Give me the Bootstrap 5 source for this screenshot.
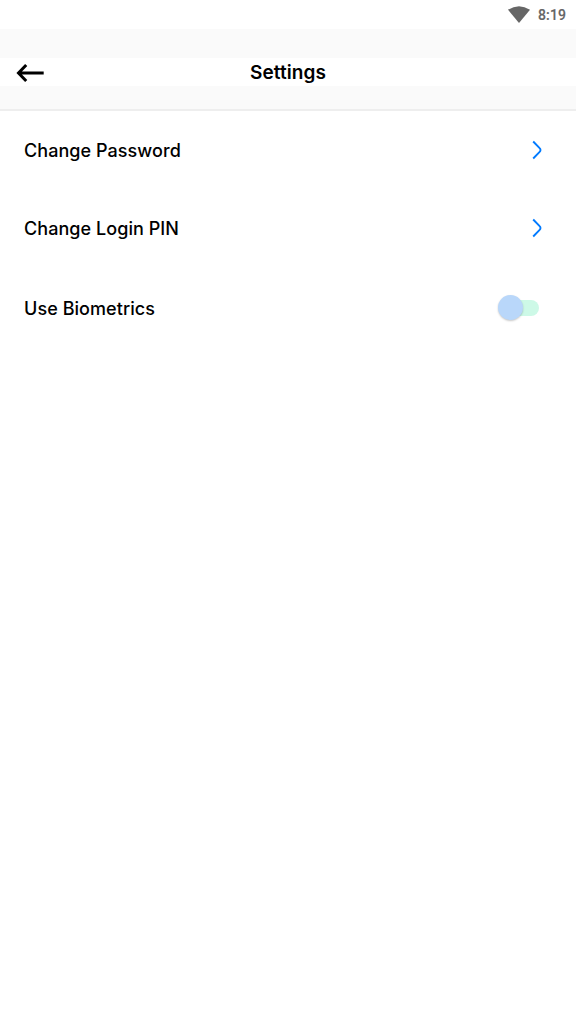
<!DOCTYPE html>
<html lang="en">
<head>
<meta charset="utf-8">
<meta name="viewport" content="width=device-width, initial-scale=1">
<title>Settings</title>
<link href="https://cdn.jsdelivr.net/npm/bootstrap@5.3.0/dist/css/bootstrap.min.css" rel="stylesheet">
<style>
body{font-family:Inter,"Liberation Sans",sans-serif;color:#000;background:#fff}
.status-bar{height:29px;padding-right:10px;gap:8px;font:500 14px/29px Roboto,sans-serif;color:#666}
.status-bar svg{margin-bottom:1px}
.status-time{padding-top:2px;letter-spacing:.1px;-webkit-text-stroke:.15px #666}
.app-header{height:82px;padding:29px 0 23px;background:#fafafa;border-bottom:2px solid #eee}
.header-strip{height:28px;background:#fff;display:grid;grid-template-columns:60px 1fr 60px}
.header-title{font-size:19px;font-weight:600;line-height:26px;padding-top:2px;letter-spacing:.1px}
.back-btn{padding:1px 0 0 15px;line-height:1}
.setting-row{height:78px;padding:0 33px 0 24px;font-size:18px;font-weight:500;letter-spacing:.06px}
.setting-row.toggle-row{height:82px;padding-right:37px}
.toggle-track{width:36px;height:16px;border-radius:8px;background:#cdf9e7}
.toggle-thumb{width:25px;height:25px;border-radius:50%;background:#b9d7fa;margin:-1px 0 0 -5px;box-shadow:0 1px 2px rgba(0,0,0,.22)}
</style>
</head>
<body>
<div class="status-bar d-flex align-items-center justify-content-end">
  <svg width="22" height="17" viewBox="0 0 22 17" aria-hidden="true"><path d="M0 3.7Q11-3.4 22 3.7L11 17Z" fill="#666"/></svg>
  <span class="status-time">8:19</span>
</div>
<header class="app-header">
  <div class="header-strip align-items-center">
    <button class="back-btn btn border-0 d-flex" aria-label="Back">
      <svg width="29" height="20" viewBox="0 0 29 20" fill="none" stroke="#000" stroke-width="3"><path d="M28.7 10H4M11.2 2L3.5 10L11.2 18"/></svg>
    </button>
    <h1 class="header-title text-center m-0">Settings</h1>
  </div>
</header>
<main>
  <div class="setting-row d-flex align-items-center justify-content-between">
    <span>Change Password</span>
    <svg width="12" height="20" viewBox="0 0 12 20" fill="none" stroke="#007aff" stroke-width="1.9" stroke-linejoin="round"><path d="M2.2 1.5L8.4 7.9Q10.6 10 8.4 12.1L2.2 18.5"/></svg>
  </div>
  <div class="setting-row d-flex align-items-center justify-content-between">
    <span>Change Login PIN</span>
    <svg width="12" height="20" viewBox="0 0 12 20" fill="none" stroke="#007aff" stroke-width="1.9" stroke-linejoin="round"><path d="M2.2 1.5L8.4 7.9Q10.6 10 8.4 12.1L2.2 18.5"/></svg>
  </div>
  <div class="setting-row toggle-row d-flex align-items-center justify-content-between">
    <span>Use Biometrics</span>
    <div class="toggle-track d-flex align-items-center" role="switch" aria-checked="false" aria-label="Use Biometrics"><div class="toggle-thumb flex-shrink-0"></div></div>
  </div>
</main>
<script src="https://cdn.jsdelivr.net/npm/bootstrap@5.3.0/dist/js/bootstrap.bundle.min.js"></script>
</body>
</html>
